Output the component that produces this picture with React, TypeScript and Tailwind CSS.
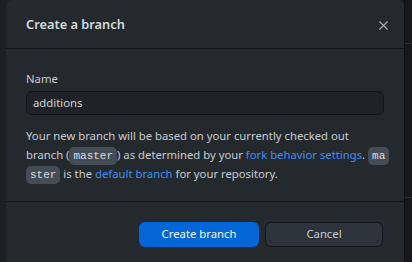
import { X } from "lucide-react";

export default function App() {
    return (
        <div className="w-[412px] h-[262px] flex overflow-hidden bg-[#1c1f23] font-['Noto_Sans',sans-serif] text-[11.3px] text-[#c7ccd1]">
            <div className="w-[6px] shrink-0" />

            <div className="w-[398px] shrink-0 flex flex-col bg-[#24292e] rounded-t-[6px]">
                <div className="h-[49px] shrink-0 flex items-center justify-between pl-[20px] pr-[13px] pt-[2px] border-b border-[#141719]">
                    <h2 className="text-[12.8px] font-semibold text-[#d5d9dd]">Create a branch</h2>
                    <button className="text-[#a8b0b8]">
                        <X size={15} strokeWidth={1.8} />
                    </button>
                </div>

                <div className="h-[153px] shrink-0 px-[20px] pt-[21px] border-b border-[#141719]">
                    <label className="block leading-[18px] mb-[3px]">Name</label>
                    <div className="h-[24px] w-[358px] flex items-center px-[6px] rounded-[6px] bg-[#1f2327] border border-[#141719] text-[#d0d4d8]">
                        additions
                    </div>
                    <p className="mt-[12px] leading-[18.5px] whitespace-nowrap">
                        Your new branch will be based on your currently checked out
                        <br />
                        branch (<code className="px-[4px] py-[3px] rounded-[5px] bg-[#444c56] font-['Liberation_Mono',monospace] text-[11px] text-[#d9dde1]">master</code>) as determined by your{" "}
                        <a className="text-[#3f8ef0]">fork behavior settings</a>.{" "}
                        <code className="px-[4px] py-[3px] rounded-[5px] bg-[#444c56] font-['Liberation_Mono',monospace] text-[11px] text-[#d9dde1]">ma</code>
                        <br />
                        <code className="px-[4px] py-[3px] rounded-[5px] bg-[#444c56] font-['Liberation_Mono',monospace] text-[11px] text-[#d9dde1]">ster</code> is the{" "}
                        <a className="text-[#3f8ef0]">default branch</a> for your repository.
                    </p>
                </div>

                <div className="flex justify-end gap-[6px] pt-[20px] pr-[21px]">
                    <button className="w-[120px] h-[25px] rounded-[6px] bg-[#0366d6] text-[#f0f4f8]">Create branch</button>
                    <button className="w-[118px] h-[25px] rounded-[6px] bg-[#2d333b] border border-[#141719] text-[#c7ccd1]">Cancel</button>
                </div>
            </div>

            <div className="flex-1 flex flex-col bg-[#16181b] border-l border-[#101214]">
                <div className="h-[44px] border-b border-[#2a2e33]" />
                <div className="h-[154px] border-b border-[#2a2e33]" />
            </div>
        </div>
    );
}
